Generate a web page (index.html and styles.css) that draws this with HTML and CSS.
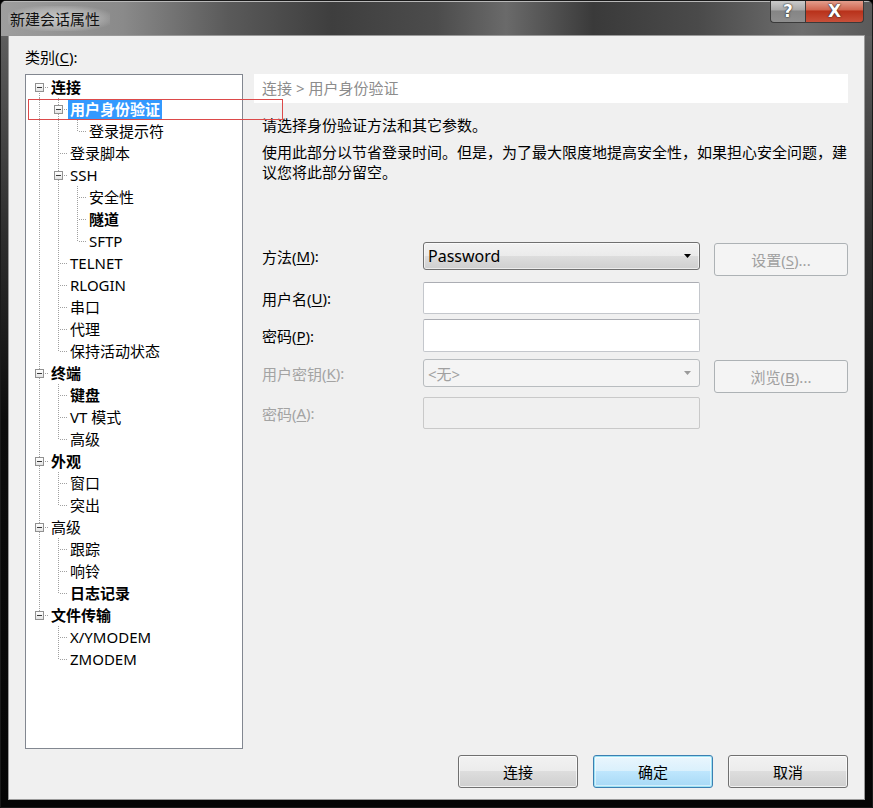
FILE: index.html
```html
<!DOCTYPE html>
<html lang="zh-CN">
<head>
<meta charset="utf-8">
<title>新建会话属性</title>
<link rel="stylesheet" href="styles.css">
</head>
<body>
<div class="window">
  <div class="titlebar">
    <span class="title">新建会话属性</span>
    <div class="caption-btns">
      <span class="cbtn help">?</span>
      <span class="cbtn close">X</span>
    </div>
  </div>
  <div class="client">
    <div class="cat-label">类别(<u>C</u>):</div>
    <div class="main">
      <div class="tree">
        <div class="row"><span class="g first"><i class="box"></i></span><span class="lbl b">连接</span></div>
        <div class="row"><span class="g line"></span><span class="g tee"><i class="box"></i></span><span class="lbl b sel">用户身份验证</span></div>
        <div class="row"><span class="g line"></span><span class="g line"></span><span class="g elbow"></span><span class="lbl">登录提示符</span></div>
        <div class="row"><span class="g line"></span><span class="g tee"></span><span class="lbl">登录脚本</span></div>
        <div class="row"><span class="g line"></span><span class="g tee"><i class="box"></i></span><span class="lbl">SSH</span></div>
        <div class="row"><span class="g line"></span><span class="g line"></span><span class="g tee"></span><span class="lbl">安全性</span></div>
        <div class="row"><span class="g line"></span><span class="g line"></span><span class="g tee"></span><span class="lbl b">隧道</span></div>
        <div class="row"><span class="g line"></span><span class="g line"></span><span class="g elbow"></span><span class="lbl">SFTP</span></div>
        <div class="row"><span class="g line"></span><span class="g tee"></span><span class="lbl">TELNET</span></div>
        <div class="row"><span class="g line"></span><span class="g tee"></span><span class="lbl">RLOGIN</span></div>
        <div class="row"><span class="g line"></span><span class="g tee"></span><span class="lbl">串口</span></div>
        <div class="row"><span class="g line"></span><span class="g tee"></span><span class="lbl">代理</span></div>
        <div class="row"><span class="g line"></span><span class="g elbow"></span><span class="lbl">保持活动状态</span></div>
        <div class="row"><span class="g tee"><i class="box"></i></span><span class="lbl b">终端</span></div>
        <div class="row"><span class="g line"></span><span class="g tee"></span><span class="lbl b">键盘</span></div>
        <div class="row"><span class="g line"></span><span class="g tee"></span><span class="lbl">VT 模式</span></div>
        <div class="row"><span class="g line"></span><span class="g elbow"></span><span class="lbl">高级</span></div>
        <div class="row"><span class="g tee"><i class="box"></i></span><span class="lbl b">外观</span></div>
        <div class="row"><span class="g line"></span><span class="g tee"></span><span class="lbl">窗口</span></div>
        <div class="row"><span class="g line"></span><span class="g elbow"></span><span class="lbl">突出</span></div>
        <div class="row"><span class="g tee"><i class="box"></i></span><span class="lbl">高级</span></div>
        <div class="row"><span class="g line"></span><span class="g tee"></span><span class="lbl">跟踪</span></div>
        <div class="row"><span class="g line"></span><span class="g tee"></span><span class="lbl">响铃</span></div>
        <div class="row"><span class="g line"></span><span class="g elbow"></span><span class="lbl b">日志记录</span></div>
        <div class="row"><span class="g elbow"><i class="box"></i></span><span class="lbl b">文件传输</span></div>
        <div class="row"><span class="g"></span><span class="g tee"></span><span class="lbl">X/YMODEM</span></div>
        <div class="row"><span class="g"></span><span class="g elbow"></span><span class="lbl">ZMODEM</span></div>
      </div>
      <div class="panel">
        <div class="crumb">连接 &gt; 用户身份验证</div>
        <p class="intro">请选择身份验证方法和其它参数。</p>
        <p class="desc">使用此部分以节省登录时间。但是，为了最大限度地提高安全性，如果担心安全问题，建<br>议您将此部分留空。</p>
        <div class="form">
          <div class="flabel h28">方法(<u>M</u>):</div>
          <div class="combo"><span>Password</span><svg class="arrow" width="7" height="4" viewBox="0 0 7 4"><polygon points="0,0 7,0 3.5,4" fill="#000"/></svg></div>
          <div class="btn small disabled">设置(<u>S</u>)...</div>

          <div class="flabel h32">用户名(<u>U</u>):</div>
          <div class="input h32"></div>
          <div></div>

          <div class="flabel h33">密码(<u>P</u>):</div>
          <div class="input h33"></div>
          <div></div>

          <div class="flabel h28 dis">用户密钥(<u>K</u>):</div>
          <div class="combo disabled"><span>&lt;无&gt;</span><svg class="arrow" width="7" height="4" viewBox="0 0 7 4"><polygon points="0,0 7,0 3.5,4" fill="#9a9a9a"/></svg></div>
          <div class="btn small disabled">浏览(<u>B</u>)...</div>

          <div class="flabel h32 dis">密码(<u>A</u>):</div>
          <div class="input h32 disabled"></div>
          <div></div>
        </div>
      </div>
    </div>
    <div class="actions">
      <div class="btn">连接</div>
      <div class="btn default">确定</div>
      <div class="btn">取消</div>
    </div>
    <div class="annot"></div>
  </div>
</div>
</body>
</html>
```
FILE: styles.css
```css
* { box-sizing: border-box; }
html, body { margin: 0; padding: 0; }
body {
  background: #000;
  font-family: "Noto Sans", "Noto Sans CJK SC", sans-serif;
  font-size: 15px;
  color: #000;
}
u { text-decoration: underline; text-underline-offset: 2px; }
p { margin: 0; }

.window {
  width: 873px;
  height: 808px;
  display: flex;
  flex-direction: column;
  background:
    linear-gradient(to bottom, #7a7a7a 0, #5c5c5c 40px, #2e2e2e 230px, #0c0c0c 420px, #050505 100%);
  border: 1px solid #1a1a1a;
  border-radius: 6px 6px 0 0;
  overflow: hidden;
}

.titlebar {
  height: 35px;
  display: flex;
  align-items: center;
  padding-left: 7px;
  padding-right: 8px;
  background:
    linear-gradient(to right, #9e9e9e 0, #8a8a8a 14%, #5a5a5a 26%, #3e3e3e 38%, #4c4c4c 50%, #6a6a6a 58%, #3a3a3a 68%, #4a4a4a 80%, #6e6e6e 92%, #5a5a5a 100%);
  box-shadow: inset 0 1px 0 #b8b8b8;
}
.title {
  font-size: 15px;
  color: #111;
  padding: 2px 10px 2px 2px;
  background: radial-gradient(ellipse at center, rgba(220,220,220,0.75) 0, rgba(200,200,200,0.45) 55%, rgba(200,200,200,0) 80%);
}
.caption-btns {
  margin-left: auto;
  align-self: flex-start;
  display: flex;
  margin-top: -1px;
}
.cbtn {
  height: 23px;
  display: flex;
  align-items: center;
  justify-content: center;
  color: #fff;
  font-weight: bold;
  font-size: 17px;
  font-family: "DejaVu Sans", sans-serif;
  text-shadow: 0 0 2px #333, 0 0 1px #000;
  border: 1px solid #3a3a3a;
  border-top: none;
}
.cbtn.help {
  width: 35px;
  border-radius: 0 0 0 4px;
  border-right: none;
  background: linear-gradient(to bottom, #cfcfcf 0, #a8a8a8 45%, #858585 50%, #8e8e8e 100%);
}
.cbtn.close {
  width: 59px;
  border-radius: 0 0 4px 0;
  background: linear-gradient(to bottom, #e6a493 0, #d06650 45%, #b8311a 50%, #c8503a 100%);
}

.client {
  position: relative;
  margin: 0 8px 8px 8px;
  height: 763px;
  background: #f0f0f0;
  padding: 11px 16px 0 16px;
  box-shadow: 0 0 0 1px #9a9a9a;
}
.cat-label {
  height: 20px;
  line-height: 20px;
  margin-bottom: 7px;
}

.main {
  display: flex;
  gap: 11px;
  height: 675px;
}

.tree {
  width: 218px;
  height: 675px;
  flex: none;
  background: #fff;
  border: 1px solid #828790;
  padding: 1px 0 0 4px;
}
.row {
  display: flex;
  align-items: center;
  height: 22px;
}
.g {
  width: 19px;
  height: 22px;
  flex: none;
  display: flex;
  align-items: center;
  justify-content: center;
}
.g.line {
  background: repeating-linear-gradient(to bottom, #a0a0a0 0 1px, transparent 1px 2px) 9px 0 / 1px 100% no-repeat;
}
.g.tee {
  background:
    repeating-linear-gradient(to bottom, #a0a0a0 0 1px, transparent 1px 2px) 9px 0 / 1px 100% no-repeat,
    repeating-linear-gradient(to right, #a0a0a0 0 1px, transparent 1px 2px) 11px 11px / 8px 1px no-repeat;
}
.g.elbow {
  background:
    repeating-linear-gradient(to bottom, #a0a0a0 0 1px, transparent 1px 2px) 9px 0 / 1px 11px no-repeat,
    repeating-linear-gradient(to right, #a0a0a0 0 1px, transparent 1px 2px) 11px 11px / 8px 1px no-repeat;
}
.g.first {
  background:
    repeating-linear-gradient(to bottom, #a0a0a0 0 1px, transparent 1px 2px) 9px 11px / 1px 11px no-repeat,
    repeating-linear-gradient(to right, #a0a0a0 0 1px, transparent 1px 2px) 11px 11px / 8px 1px no-repeat;
}
.box {
  display: block;
  width: 9px;
  height: 9px;
  border: 1px solid #919191;
  background:
    linear-gradient(#3a3a3a, #3a3a3a) 1px 3px / 5px 1px no-repeat,
    linear-gradient(to bottom, #ffffff, #e4e4e4);
}
.lbl {
  height: 20px;
  line-height: 20px;
  padding: 0 2px;
  white-space: nowrap;
  font-size: 15px;
}
.lbl.b { font-weight: bold; }
.lbl.sel { background: #3399ff; color: #fff; }

.panel {
  width: 594px;
  flex: none;
}
.crumb {
  height: 29px;
  line-height: 28px;
  background: #fff;
  padding-left: 8px;
  color: #8c8c8c;
}
.intro {
  margin-top: 12px;
  padding-left: 8px;
  line-height: 20px;
}
.desc {
  margin-top: 7px;
  padding-left: 8px;
  line-height: 20px;
  white-space: nowrap;
}
.form {
  margin-top: 60px;
  padding-left: 8px;
  display: grid;
  grid-template-columns: 161px 277px 148px;
  grid-template-rows: 40px 37px 40px 38px 33px;
  column-gap: 0;
  align-items: start;
}
.flabel {
  display: flex;
  align-items: center;
  white-space: nowrap;
}
.flabel.dis { color: #a3a3a3; }
.h28 { height: 28px; }
.h32 { height: 32px; }
.h33 { height: 33px; }

.combo {
  height: 28px;
  border: 1px solid #707070;
  border-radius: 3px;
  display: flex;
  align-items: center;
  padding: 0 8px 0 4px;
  font-size: 16px;
  background: linear-gradient(to bottom, #f2f2f2 0, #ebebeb 50%, #dddddd 50%, #cfcfcf 100%);
  box-shadow: inset 0 0 0 1px rgba(255,255,255,0.6);
}
.combo span { flex: 1; }
.combo.disabled {
  border-color: #b8bcbf;
  background: #f4f4f4;
  color: #a0a0a0;
  box-shadow: none;
  font-size: 15px;
}
.arrow { flex: none; }

.input {
  background: #fff;
  border: 1px solid #c4c7cc;
  border-top-color: #abadb3;
  border-radius: 2px;
}
.input.disabled {
  background: #f0f0f0;
  border-color: #c9c9c9;
}

.btn {
  width: 120px;
  height: 33px;
  display: flex;
  align-items: center;
  justify-content: center;
  border: 1px solid #707070;
  border-radius: 3px;
  background: linear-gradient(to bottom, #f2f2f2 0, #ebebeb 50%, #dddddd 50%, #cfcfcf 100%);
  box-shadow: inset 0 0 0 1px rgba(255,255,255,0.7);
}
.btn.small {
  width: 134px;
  height: 33px;
  margin-top: 1px;
  justify-self: end;
}
.btn.disabled {
  border-color: #adb2b5;
  background: #f4f4f4;
  color: #a0a0a0;
  box-shadow: none;
}
.btn.default {
  border-color: #3c7fb1;
  background: linear-gradient(to bottom, #eaf6fd 0, #d9f0fc 50%, #bee6fd 50%, #a7d9f5 100%);
  box-shadow: inset 0 0 0 1px #9de3f5, inset 0 0 0 2px rgba(255,255,255,0.5);
}

.actions {
  display: flex;
  justify-content: flex-end;
  gap: 15px;
  margin-top: 6px;
}

.annot {
  position: absolute;
  left: 19px;
  top: 63px;
  width: 255px;
  height: 21px;
  border: 1px solid #dc4a4a;
  pointer-events: none;
}
```
